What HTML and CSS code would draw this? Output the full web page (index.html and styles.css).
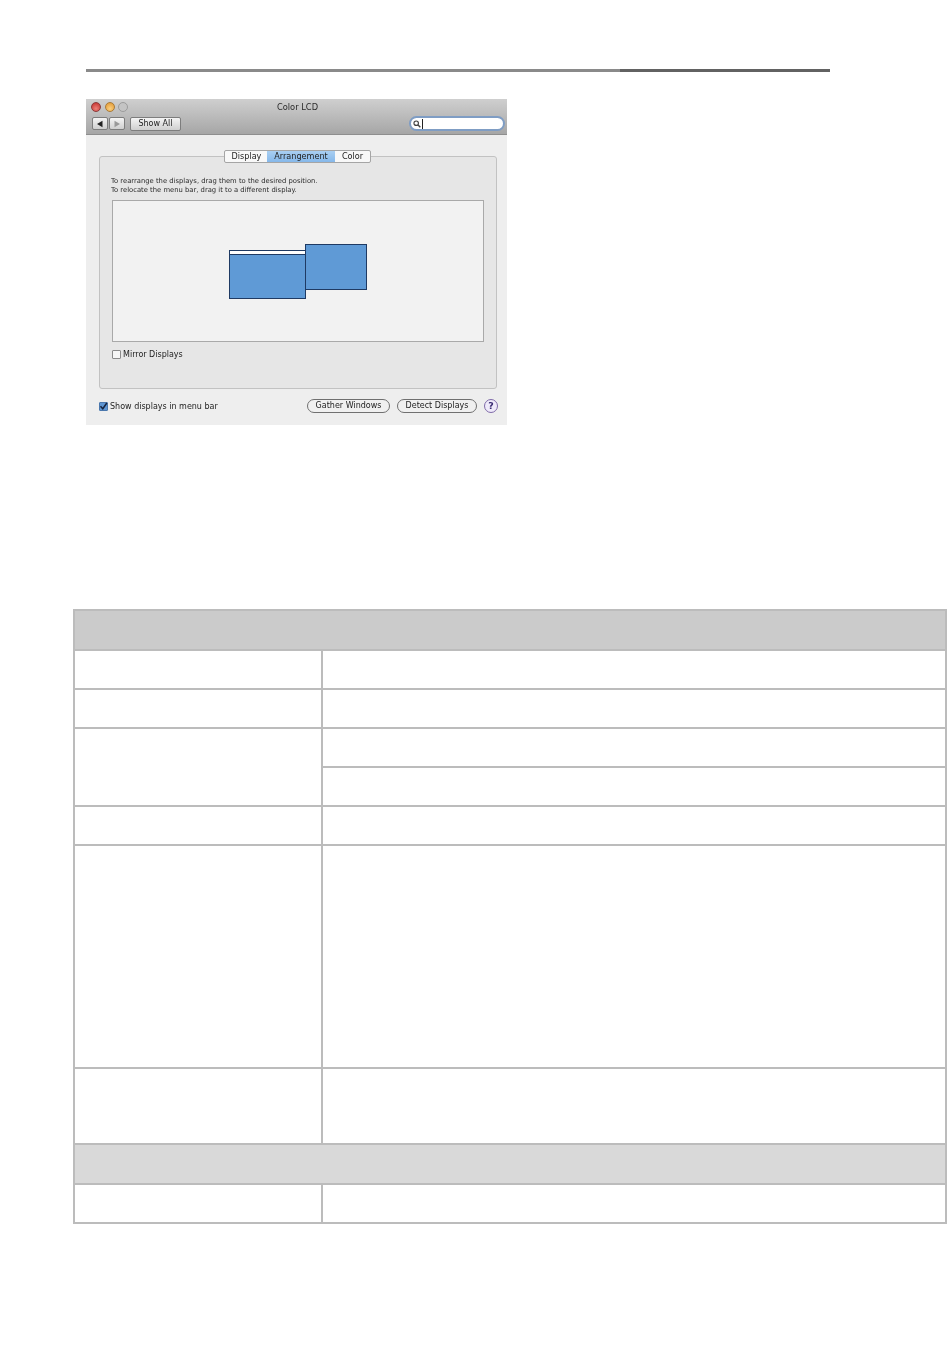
FILE: index.html
```html
<!DOCTYPE html>
<html lang="en">
<head>
<meta charset="utf-8">
<title>Color LCD</title>
<link rel="stylesheet" href="styles.css">
</head>
<body>
<div class="rule"><span class="rule-a"></span><span class="rule-b"></span></div>

<section class="window">
  <header class="titlebar">
    <div class="title-row">
      <span class="light red"></span><span class="light amber"></span><span class="light grey"></span>
      <span class="title">Color LCD</span>
    </div>
    <div class="tool-row">
      <div class="nav">
        <span class="nav-btn"><svg width="8" height="8" viewBox="0 0 8 8"><path d="M6.5 0.8V7.2L1 4Z" fill="#222"/></svg></span>
        <span class="nav-btn"><svg width="8" height="8" viewBox="0 0 8 8"><path d="M1.5 0.8V7.2L7 4Z" fill="#999"/></svg></span>
      </div>
      <span class="showall">Show All</span>
      <div class="search">
        <svg width="8" height="8" viewBox="0 0 9 9"><circle cx="3.6" cy="3.6" r="2.5" fill="none" stroke="#444" stroke-width="1.3"/><path d="M5.4 5.4L8.2 8.2" stroke="#444" stroke-width="1.6"/></svg>
        <span class="caret"></span>
      </div>
    </div>
  </header>

  <div class="body">
    <div class="panel">
      <div class="tabs">
        <span class="tab tab-display">Display</span>
        <span class="tab tab-arr">Arrangement</span>
        <span class="tab tab-color">Color</span>
      </div>
      <p class="hint">To rearrange the displays, drag them to the desired position.<br>To relocate the menu bar, drag it to a different display.</p>
      <div class="canvas">
        <div class="screen screen-main"></div>
        <div class="screen screen-second"></div>
      </div>
      <label class="check check-mirror"><span class="box"></span>Mirror Displays</label>
    </div>
    <div class="footer">
      <label class="check"><span class="box on"><svg width="9" height="9" viewBox="0 0 9 9"><path d="M1.5 4.2L3.8 6.8L7.8 1" fill="none" stroke="#16233f" stroke-width="1.5"/></svg></span>Show displays in menu bar</label>
      <div class="actions">
        <span class="pill pill-gather">Gather Windows</span>
        <span class="pill pill-detect">Detect Displays</span>
        <span class="help">?</span>
      </div>
    </div>
  </div>
</section>

<table class="spec">
  <colgroup><col class="c1"><col class="c2"></colgroup>
  <tr class="h-head"><td colspan="2" class="head-a"></td></tr>
  <tr><td></td><td></td></tr>
  <tr><td></td><td></td></tr>
  <tr><td rowspan="2"></td><td></td></tr>
  <tr><td></td></tr>
  <tr><td></td><td></td></tr>
  <tr class="h-tall"><td></td><td></td></tr>
  <tr class="h-mid"><td></td><td></td></tr>
  <tr class="h-head"><td colspan="2" class="head-b"></td></tr>
  <tr><td></td><td></td></tr>
</table>
</body>
</html>
```
FILE: styles.css
```css
html, body { margin: 0; padding: 0; background: #fff; }
body {
  width: 950px;
  height: 1359px;
  overflow: hidden;
  padding-top: 69px;
  box-sizing: border-box;
  font-family: "DejaVu Sans", "Liberation Sans", sans-serif;
  color: #222;
}

.rule { display: flex; margin-left: 86px; width: 744px; height: 3px; filter: blur(0.3px); }
.rule-a { width: 534px; background: #8a8a8a; }
.rule-b { width: 210px; background: #626262; }

.window {
  margin: 27px 0 0 86px;
  width: 421px;
  height: 326px;
  background: #eeeeee;
  filter: blur(0.35px);
}
.titlebar {
  height: 36px;
  box-sizing: border-box;
  background: linear-gradient(#cfcfcf, #a6a6a6);
  border-bottom: 1px solid #8e8e8e;
  padding: 3px 2px 0 5px;
}
.title-row { display: flex; align-items: center; gap: 3.5px; height: 10px; position: relative; }
.light { width: 10px; height: 10px; border-radius: 50%; box-sizing: border-box; }
.red { background: radial-gradient(circle at 50% 70%, #ee8078, #c02a28); border: 1px solid #8c3a3a; }
.amber { background: radial-gradient(circle at 50% 70%, #fbd080, #e0942c); border: 1px solid #a87a38; }
.grey { background: #c4c4c4; border: 1px solid #9c9c9c; }
.title {
  position: absolute;
  left: -1px; right: 0;
  text-align: center;
  font-size: 8.3px;
  color: #2a2a2a;
}
.tool-row { display: flex; align-items: center; margin-top: 4px; height: 15px; padding-left: 1px; }
.nav { display: flex; gap: 1px; }
.nav-btn {
  width: 16px;
  height: 13px;
  display: flex;
  align-items: center;
  justify-content: center;
  background: linear-gradient(#f4f4f4, #cfcfcf);
  border: 1px solid #7d7d7d;
  box-sizing: border-box;
  border-radius: 2px;
}
.showall {
  margin-left: 5px;
  width: 51px;
  height: 14px;
  box-sizing: border-box;
  background: linear-gradient(#f4f4f4, #cfcfcf);
  border: 1px solid #7d7d7d;
  border-radius: 2px;
  font-size: 8px;
  line-height: 12px;
  text-align: center;
}
.search {
  margin-left: auto;
  width: 96px;
  height: 15px;
  box-sizing: border-box;
  background: #fff;
  border: 2px solid #7f9dc4;
  border-radius: 8px;
  display: flex;
  align-items: center;
  padding-left: 2px;
  gap: 1px;
}
.caret { width: 1px; height: 10px; background: #222; }

.body { padding: 21px 10px 0 13px; }
.panel {
  position: relative;
  width: 398px;
  height: 233px;
  box-sizing: border-box;
  background: #e6e6e6;
  border: 1px solid #c2c2c2;
  border-radius: 3px;
  padding: 20px 12px 0;
}
.tabs {
  position: absolute;
  top: -7px;
  left: 124px;
  display: flex;
  height: 13px;
  box-sizing: border-box;
  border: 1px solid #a5a5a5;
  border-radius: 2px;
  background: #f8f8f8;
  font-size: 8.1px;
  line-height: 11px;
  text-align: center;
}
.tab { display: block; }
.tab-display { width: 42px; padding-left: 1px; box-sizing: border-box; }
.tab-arr { width: 68px; background: linear-gradient(#a9cff2, #86b8ea); }
.tab-color { width: 35px; }
.hint {
  margin: 0 0 0 -1px;
  font-size: 6.8px;
  line-height: 8.5px;
  color: #2a2a2a;
}
.canvas {
  position: relative;
  margin-top: 6px;
  width: 372px;
  height: 142px;
  box-sizing: border-box;
  background: #f2f2f2;
  border: 1px solid #a9a9a9;
}
.screen {
  position: absolute;
  box-sizing: border-box;
  background: #5f9ad6;
  border: 1px solid #1f3a63;
}
.screen-main {
  left: 116px;
  top: 49px;
  width: 77px;
  height: 49px;
}
.screen-main::before {
  content: "";
  position: absolute;
  left: 0; right: 0;
  top: 0;
  height: 3px;
  background: #fff;
  border-bottom: 1px solid #1f3a63;
}
.screen-second {
  left: 192px;
  top: 43px;
  width: 62px;
  height: 46px;
}
.check {
  display: flex;
  align-items: center;
  gap: 2px;
  font-size: 8px;
  color: #222;
}
.check-mirror { margin-top: 8px; }
.box {
  width: 9px;
  height: 9px;
  box-sizing: border-box;
  border: 1px solid #8a8a8a;
  border-radius: 1px;
  background: #f6f6f6;
  display: block;
  position: relative;
}
.box.on { background: #5e95d2; border-color: #4a77ad; }
.box.on svg { position: absolute; left: -1px; top: -1px; }
.footer {
  display: flex;
  align-items: center;
  justify-content: space-between;
  height: 16px;
  margin-top: 9px;
}
.actions { display: flex; align-items: center; }
.pill {
  height: 14px;
  box-sizing: border-box;
  background: #f0f0f0;
  border: 1px solid #707070;
  border-radius: 7px;
  font-size: 8px;
  line-height: 12px;
  text-align: center;
}
.pill-gather { width: 83px; }
.pill-detect { width: 80px; margin-left: 7px; }
.help {
  width: 14px;
  height: 14px;
  margin: 0 -1px 0 7px;
  box-sizing: border-box;
  border: 1px solid #7f6aa8;
  border-radius: 50%;
  background: #efeafa;
  font-size: 9.5px;
  font-weight: bold;
  line-height: 12px;
  text-align: center;
  color: #3b2c73;
}

.spec {
  margin: 184px 0 0 73px;
  border-collapse: collapse;
  table-layout: fixed;
  width: 874px;
  filter: blur(0.3px);
}
.c1 { width: 248px; }
.spec td { border: 2px solid #bcbcbc; height: 39px; box-sizing: border-box; padding: 0; background: #fff; }
.spec tr { height: 39px; }
.spec .h-head td { height: 40px; }
.spec .h-tall td { height: 223px; }
.spec .h-mid td { height: 76px; }
.spec .head-a { background: #cbcbcb; }
.spec .head-b { background: #d9d9d9; }
```
